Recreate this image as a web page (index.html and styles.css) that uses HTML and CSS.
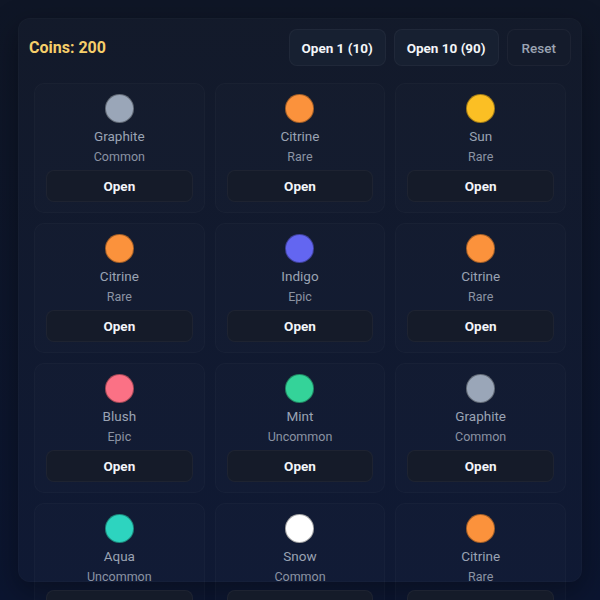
FILE: index.html
```html
<!DOCTYPE html>
<html lang="en">
<head>
  <meta charset="UTF-8">
  <title>Gacha</title>
  <link rel="stylesheet" href="styles.css">
</head>
<body>
<div class="panel">
  <div class="top">
    <div class="coins">Coins: 200</div>
    <div class="actions">
      <button class="btn">Open 1 (10)</button>
      <button class="btn">Open 10 (90)</button>
      <button class="btn reset">Reset</button>
    </div>
  </div>
  <ul class="grid">
    <li class="card"><span class="dot graphite"></span><span class="name">Graphite</span><span class="rarity">Common</span><button class="open">Open</button></li>
    <li class="card"><span class="dot citrine"></span><span class="name">Citrine</span><span class="rarity">Rare</span><button class="open">Open</button></li>
    <li class="card"><span class="dot sun"></span><span class="name">Sun</span><span class="rarity">Rare</span><button class="open">Open</button></li>
    <li class="card"><span class="dot citrine"></span><span class="name">Citrine</span><span class="rarity">Rare</span><button class="open">Open</button></li>
    <li class="card"><span class="dot indigo"></span><span class="name">Indigo</span><span class="rarity">Epic</span><button class="open">Open</button></li>
    <li class="card"><span class="dot citrine"></span><span class="name">Citrine</span><span class="rarity">Rare</span><button class="open">Open</button></li>
    <li class="card"><span class="dot blush"></span><span class="name">Blush</span><span class="rarity">Epic</span><button class="open">Open</button></li>
    <li class="card"><span class="dot mint"></span><span class="name">Mint</span><span class="rarity">Uncommon</span><button class="open">Open</button></li>
    <li class="card"><span class="dot graphite"></span><span class="name">Graphite</span><span class="rarity">Common</span><button class="open">Open</button></li>
    <li class="card"><span class="dot aqua"></span><span class="name">Aqua</span><span class="rarity">Uncommon</span><button class="open">Open</button></li>
    <li class="card"><span class="dot snow"></span><span class="name">Snow</span><span class="rarity">Common</span><button class="open">Open</button></li>
    <li class="card"><span class="dot citrine"></span><span class="name">Citrine</span><span class="rarity">Rare</span><button class="open">Open</button></li>
  </ul>
</div>
</body>
</html>
```

FILE: styles.css
```css
*{box-sizing:border-box;}
html,body,ul,li{margin:0;padding:0;}
ul{list-style-type:none;}
html{height:100%;background:linear-gradient(180deg,#0f1626 0%,#0b1530 100%);}
body{height:100%;padding:18px;font-family:Roboto,"Liberation Sans",sans-serif;color:#9aa3b2;overflow:hidden;}
.panel{height:564px;padding:10px;border-radius:12px;background:rgba(255,255,255,0.018);border:1px solid rgba(255,255,255,0.02);box-shadow:0 10px 30px rgba(0,0,0,0.35);}
.top{display:flex;align-items:center;justify-content:space-between;}
.coins{font-size:16px;font-weight:700;color:#f6cf6a;}
.actions{display:flex;gap:8px;}
.btn{height:37px;padding:0 12px;border-radius:8px;border:1px solid rgba(255,255,255,0.04);background:#172031;color:#f3f5f8;font:700 13.5px Roboto,"Liberation Sans",sans-serif;}
.btn.reset{padding:0 14px;background:#141b2b;color:#9aa3b2;font-weight:500;}
.grid{display:grid;grid-template-columns:repeat(3,1fr);gap:10px;margin:17px 5px 0;}
.card{display:flex;flex-direction:column;align-items:center;height:130px;padding:10px 11px;border-radius:10px;background:rgba(255,255,255,0.012);border:1px solid rgba(255,255,255,0.025);}
.dot{width:29px;height:29px;border-radius:50%;border:1.5px solid rgba(0,0,0,0.35);}
.name{margin-top:4px;font-size:13.5px;line-height:18px;color:#9aa3b3;}
.rarity{margin-top:3px;font-size:12.5px;line-height:18px;color:#8b93a3;}
.open{width:100%;height:33px;margin-top:4px;border-radius:8px;border:1px solid rgba(255,255,255,0.04);background:#151b29;color:#f3f5f8;font:700 13.5px Roboto,"Liberation Sans",sans-serif;}
.graphite{background:#9aa6b8;}
.citrine{background:#fb923c;}
.sun{background:#fbbf24;}
.indigo{background:#6366f1;}
.blush{background:#fb7185;}
.mint{background:#34d399;}
.aqua{background:#2dd4bf;}
.snow{background:#ffffff;}
```
